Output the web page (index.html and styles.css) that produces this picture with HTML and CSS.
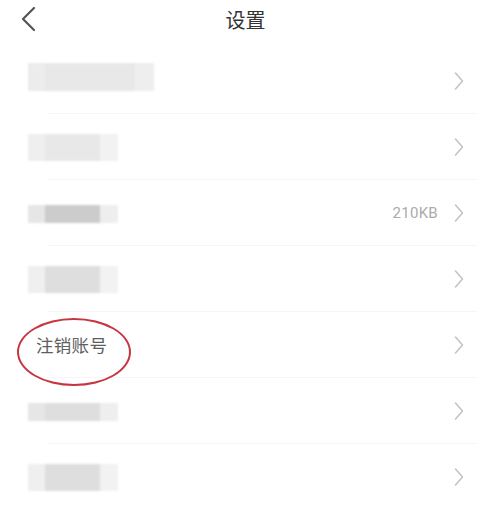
FILE: index.html
```html
<!DOCTYPE html>
<html lang="zh">
<head>
<meta charset="utf-8">
<title>设置</title>
<link rel="stylesheet" href="styles.css">
</head>
<body>
<div class="page">
  <header class="header">
    <svg class="back" width="16" height="26" viewBox="0 0 16 26"><polyline points="13,2 2,13 13,24" fill="none" stroke="#555" stroke-width="2.2" stroke-linecap="round" stroke-linejoin="round"/></svg>
    <h1 class="title">设置</h1>
  </header>
  <ul class="list">
    <li class="row">
      <div class="mask mask-wide"><span class="m-a"></span><span class="m-b light"></span><span class="m-c"></span></div>
      <span class="spacer"></span>
      <svg class="chev" width="10" height="20" viewBox="0 0 10 20"><polyline points="1.5,2 8.5,10 1.5,18" fill="none" stroke="#c2c2c2" stroke-width="1.5" stroke-linecap="round" stroke-linejoin="round"/></svg>
    </li>
    <li class="row">
      <div class="mask mask-tall"><span class="m-a"></span><span class="m-b light"></span><span class="m-c"></span></div>
      <span class="spacer"></span>
      <svg class="chev" width="10" height="20" viewBox="0 0 10 20"><polyline points="1.5,2 8.5,10 1.5,18" fill="none" stroke="#c2c2c2" stroke-width="1.5" stroke-linecap="round" stroke-linejoin="round"/></svg>
    </li>
    <li class="row">
      <div class="mask mask-short"><span class="m-a"></span><span class="m-b dark"></span><span class="m-c"></span></div>
      <span class="spacer"></span>
      <span class="value">210KB</span>
      <svg class="chev" width="10" height="20" viewBox="0 0 10 20"><polyline points="1.5,2 8.5,10 1.5,18" fill="none" stroke="#c2c2c2" stroke-width="1.5" stroke-linecap="round" stroke-linejoin="round"/></svg>
    </li>
    <li class="row">
      <div class="mask mask-tall"><span class="m-a"></span><span class="m-b mid"></span><span class="m-c"></span></div>
      <span class="spacer"></span>
      <svg class="chev" width="10" height="20" viewBox="0 0 10 20"><polyline points="1.5,2 8.5,10 1.5,18" fill="none" stroke="#c2c2c2" stroke-width="1.5" stroke-linecap="round" stroke-linejoin="round"/></svg>
    </li>
    <li class="row row-marked">
      <span class="label">注销账号</span>
      <span class="spacer"></span>
      <svg class="chev" width="10" height="20" viewBox="0 0 10 20"><polyline points="1.5,2 8.5,10 1.5,18" fill="none" stroke="#c2c2c2" stroke-width="1.5" stroke-linecap="round" stroke-linejoin="round"/></svg>
      <span class="circle"></span>
    </li>
    <li class="row">
      <div class="mask mask-short"><span class="m-a"></span><span class="m-b mid"></span><span class="m-c"></span></div>
      <span class="spacer"></span>
      <svg class="chev" width="10" height="20" viewBox="0 0 10 20"><polyline points="1.5,2 8.5,10 1.5,18" fill="none" stroke="#c2c2c2" stroke-width="1.5" stroke-linecap="round" stroke-linejoin="round"/></svg>
    </li>
    <li class="row">
      <div class="mask mask-tall"><span class="m-a"></span><span class="m-b mid"></span><span class="m-c"></span></div>
      <span class="spacer"></span>
      <svg class="chev" width="10" height="20" viewBox="0 0 10 20"><polyline points="1.5,2 8.5,10 1.5,18" fill="none" stroke="#c2c2c2" stroke-width="1.5" stroke-linecap="round" stroke-linejoin="round"/></svg>
    </li>
  </ul>
</div>
</body>
</html>
```

FILE: styles.css
```css
* { box-sizing: border-box; }
html, body { margin: 0; padding: 0; background: #fff; }
body {
  font-family: "Noto Sans CJK SC", "Noto Sans", sans-serif;
  color: #333;
  width: 483px;
  height: 513px;
  overflow: hidden;
}
.page { display: flex; flex-direction: column; }

.header {
  height: 48px;
  position: relative;
  display: flex;
  justify-content: center;
  padding-top: 5px;
}
.back {
  position: absolute;
  left: 21px;
  top: 6px;
}
.title {
  margin: 0 0 0 8px;
  font-size: 20px;
  font-weight: 400;
  line-height: 30px;
  color: #333;
}

.list { list-style: none; margin: 0; padding: 0; }
.row {
  position: relative;
  height: 66px;
  display: flex;
  align-items: center;
  padding: 0 19px 0 28px;
}
.row::after {
  content: "";
  position: absolute;
  left: 47px;
  right: 6px;
  bottom: 0;
  height: 1px;
  background: #f6f6f6;
}
.row:last-child::after { display: none; }
.spacer { flex: 1; }

.chev { display: block; }
.value {
  font-family: "Roboto", "Liberation Sans", sans-serif;
  font-size: 15px;
  color: #ababab;
  margin-right: 16px;
  letter-spacing: 0.3px;
}

.mask {
  display: flex;
  filter: blur(1.3px);
}
.mask span { display: block; height: 100%; }
.mask-wide { height: 28px; width: 126px; margin-top: -9px; }
.mask-wide .m-a { width: 17px; background: #ececec; }
.mask-wide .m-b { width: 90px; }
.mask-wide .m-c { width: 19px; background: #eeeeee; }
.mask-tall { height: 27px; width: 90px; margin-top: 1px; }
.mask-tall .m-a { width: 17px; background: #efefef; }
.mask-tall .m-b { width: 55px; }
.mask-tall .m-c { width: 18px; background: #f2f2f2; }
.mask-short { height: 18px; width: 90px; margin-top: 1px; }
.mask-short .m-a { width: 17px; background: #e6e6e6; }
.mask-short .m-b { width: 55px; }
.mask-short .m-c { width: 18px; background: #eeeeee; }
.light { background: #e8e8e8; }
.mid { background: #dedede; }
.dark { background: #cccccc; }

.label {
  margin-left: 8px;
  font-size: 17.5px;
  color: #5e5e5e;
  letter-spacing: 0.3px;
  line-height: 24px;
}
.circle {
  position: absolute;
  left: 17px;
  top: 6px;
  width: 114px;
  height: 68px;
  border: 2.2px solid #c63642;
  border-radius: 50%;
  z-index: 2;
}
```
